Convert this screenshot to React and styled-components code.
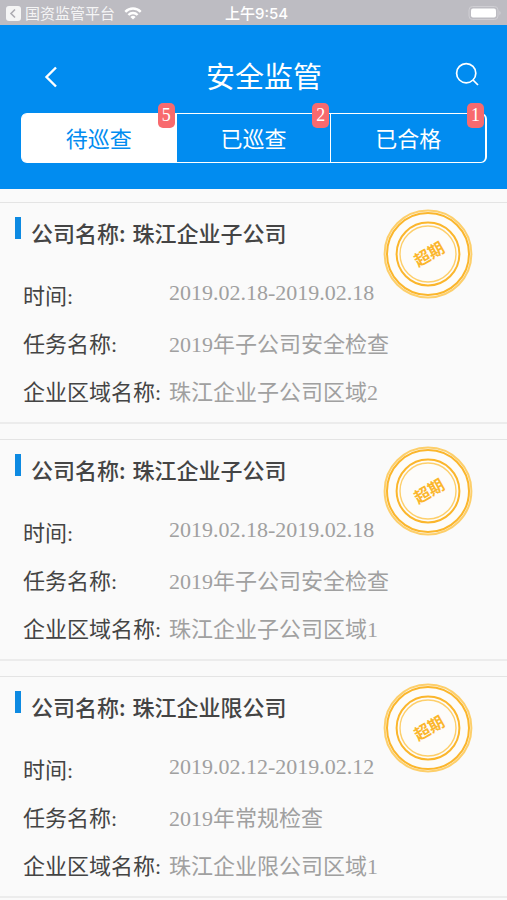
import React, { useState } from 'react';
import styled, { createGlobalStyle } from 'styled-components';

const GlobalStyle = createGlobalStyle`
  * {
    box-sizing: border-box;
  }

  body {
    margin: 0;
    background-color: #fafafa;
    font-family: 'Liberation Serif', 'Noto Sans CJK SC', serif;
    font-size: 22px;
    color: #444;
  }

  button {
    border: 0;
    padding: 0;
    background: none;
    color: inherit;
    font: inherit;
    cursor: pointer;
  }
`;

const StatusBar = styled.div`
  display: grid;
  grid-template-columns: 1fr auto 1fr;
  align-items: center;
  height: 25px;
  padding: 2px 6px 0;
  background-color: #bdbcc2;
  color: #fff;
  font-family: 'Inter', 'Noto Sans CJK SC', sans-serif;
  font-size: 15px;
  line-height: 22px;
`;

const StatusTime = styled.span`
  padding-left: 6px;
  font-weight: 500;
`;

const StatusLeft = styled.div`
  display: flex;
  align-items: center;
  gap: 4px;
`;

const BackToApp = styled.button`
  display: flex;
  align-items: center;
  gap: 4px;
  opacity: 0.85;
`;

const StatusRight = styled.div`
  display: flex;
  justify-content: flex-end;
`;

const Header = styled.header`
  padding: 16px 20px 26px 21px;
  background-color: #018cf0;
  color: #fff;
`;

const TitleBar = styled.div`
  display: grid;
  grid-template-columns: 60px 1fr 40px;
  align-items: center;
  height: 72px;
`;

const IconButton = styled.button`
  display: flex;
  justify-content: ${({ $end }) => ($end ? 'flex-end' : 'flex-start')};
  padding: ${({ $end }) => ($end ? '0 8px 6px 0' : '0 0 0 23px')};
`;

const PageTitle = styled.h1`
  margin: 0;
  padding-top: 2px;
  text-align: center;
  font-size: 29px;
  font-weight: 400;
  line-height: 40px;
`;

const Tabs = styled.div`
  display: flex;
  height: 50px;
  border: 1px solid #fff;
  border-right-width: 2px;
  border-radius: 6px;
`;

const Tab = styled.button`
  && {
    position: relative;
    flex: 1;
    padding-top: 3px;
    background-color: ${({ $active }) => ($active ? '#fff' : 'transparent')};
    color: ${({ $active }) => ($active ? '#018cf0' : '#fff')};
    line-height: 44px;
    border-radius: ${({ $active }) => ($active ? '4px 0 0 4px' : '0')};
  }

  && + && {
    border-left: 1px solid #fff;
  }
`;

const Badge = styled.span`
  position: absolute;
  top: -11px;
  right: 1px;
  width: 17px;
  height: 25px;
  border-radius: 5px;
  background-color: #f86a6e;
  color: #fff;
  font-size: 18px;
  line-height: 24px;
  text-align: center;
`;

const List = styled.main`
  display: flex;
  flex-direction: column;
  gap: 15px;
  padding-top: 13px;
`;

const Card = styled.article`
  position: relative;
  padding: 8px 20px 5px 15px;
  border-top: 1px solid #e4e4e4;
  border-bottom: 2px solid #ececec;
`;

const CardTitle = styled.h2`
  display: flex;
  margin: 0;
  height: 62px;
  font-family: 'Noto Sans CJK SC', sans-serif;
  font-size: 22px;
  font-weight: 500;
  line-height: 42px;

  &::before {
    content: '';
    width: 6px;
    height: 22px;
    margin: 6px 10px 0 0;
    background-color: #0d8ae2;
  }
`;

const Company = styled.span`
  padding-left: 7px;
`;

const Fields = styled.dl`
  margin: 0;
  padding-left: 8px;
`;

const Field = styled.div`
  display: grid;
  grid-template-columns: 146px 1fr;
  height: 48px;
  line-height: 48px;
  white-space: nowrap;
`;

const Value = styled.dd`
  margin: 0;
  color: #a0a0a0;
  line-height: ${({ $date }) => ($date ? '40px' : '48px')};
`;

const Stamp = styled.svg`
  position: absolute;
  top: 6px;
  right: 34px;
  width: 90px;
  height: 90px;
`;

const TABS = [
  { name: '待巡查', count: 5 },
  { name: '已巡查', count: 2 },
  { name: '已合格', count: 1 },
];

const TASKS = [
  {
    company: '珠江企业子公司',
    date: '2019.02.18-2019.02.18',
    task: '2019年子公司安全检查',
    area: '珠江企业子公司区域2',
  },
  {
    company: '珠江企业子公司',
    date: '2019.02.18-2019.02.18',
    task: '2019年子公司安全检查',
    area: '珠江企业子公司区域1',
  },
  {
    company: '珠江企业限公司',
    date: '2019.02.12-2019.02.12',
    task: '2019年常规检查',
    area: '珠江企业限公司区域1',
  },
];

function OverdueStamp() {
  return (
    <Stamp viewBox="0 0 90 90" fill="none">
      <circle cx="45" cy="45" r="42" fill="#fdfcfa" />
      <circle cx="45" cy="45" r="43.4" stroke="#fdcf6b" strokeWidth="2" />
      <circle cx="45" cy="45" r="41" stroke="#fbb62c" strokeWidth="2" />
      <circle cx="45" cy="45" r="31.4" stroke="#fbb62c" strokeWidth="2" />
      <circle cx="45" cy="45" r="28" stroke="#fdcf6b" strokeWidth="1.4" />
      <text
        x="46"
        y="51"
        transform="rotate(-30 46 45)"
        textAnchor="middle"
        fontFamily="'Noto Sans CJK SC', sans-serif"
        fontSize="16"
        fontWeight="700"
        fill="#fbb62c"
      >
        超期
      </text>
    </Stamp>
  );
}

function TaskCard({ item }) {
  return (
    <Card>
      <CardTitle>
        公司名称:<Company>{item.company}</Company>
      </CardTitle>
      <Fields>
        <Field>
          <dt>时间:</dt>
          <Value $date>{item.date}</Value>
        </Field>
        <Field>
          <dt>任务名称:</dt>
          <Value>{item.task}</Value>
        </Field>
        <Field>
          <dt>企业区域名称:</dt>
          <Value>{item.area}</Value>
        </Field>
      </Fields>
      <OverdueStamp />
    </Card>
  );
}

export default function App() {
  const [active, setActive] = useState(0);

  return (
    <>
      <GlobalStyle />
      <StatusBar>
        <StatusLeft>
          <BackToApp>
            <svg width="15" height="15" viewBox="0 0 15 15">
              <rect width="15" height="15" rx="3" fill="#fff" />
              <path d="M9 3.5 5 7.5l4 4" fill="none" stroke="#aaa9af" strokeWidth="1.6" />
            </svg>
            国资监管平台
          </BackToApp>
          <svg width="28" height="13" viewBox="0 0 28 13" fill="none" stroke="#fff" strokeWidth="2.4">
            <path d="M6.3 4.8a10.8 10.8 0 0 1 15.4 0" />
            <path d="M9.4 8a6.4 6.4 0 0 1 9.2 0" />
            <path d="M14 12.6 11.4 10a3.7 3.7 0 0 1 5.2 0z" fill="#fff" stroke="none" />
          </svg>
        </StatusLeft>
        <StatusTime>上午9:54</StatusTime>
        <StatusRight>
          <svg width="33" height="15" viewBox="0 0 33 15">
            <rect x="1" y="0.5" width="29" height="13" rx="3.5" fill="none" stroke="#cfced3" />
            <rect x="3" y="2.5" width="25" height="9" rx="2" fill="#fff" />
            <path d="M31.3 5v4q1.4-.6 1.4-2t-1.4-2z" fill="#cfced3" />
          </svg>
        </StatusRight>
      </StatusBar>
      <Header>
        <TitleBar>
          <IconButton aria-label="返回">
            <svg width="14" height="22" viewBox="0 0 14 22" fill="none" stroke="#fff" strokeWidth="2.4">
              <path d="M12 1.5 2.5 11 12 20.5" />
            </svg>
          </IconButton>
          <PageTitle>安全监管</PageTitle>
          <IconButton $end aria-label="搜索">
            <svg width="24" height="24" viewBox="0 0 24 24" fill="none" stroke="#fff" strokeWidth="1.7">
              <circle cx="11.2" cy="11.2" r="9.6" />
              <path d="m18 18 5 5" />
            </svg>
          </IconButton>
        </TitleBar>
        <Tabs>
          {TABS.map((tab, i) => (
            <Tab key={tab.name} $active={i === active} onClick={() => setActive(i)}>
              {tab.name}
              <Badge>{tab.count}</Badge>
            </Tab>
          ))}
        </Tabs>
      </Header>
      <List>
        {TASKS.map((item) => (
          <TaskCard key={item.area + item.date} item={item} />
        ))}
      </List>
    </>
  );
}
